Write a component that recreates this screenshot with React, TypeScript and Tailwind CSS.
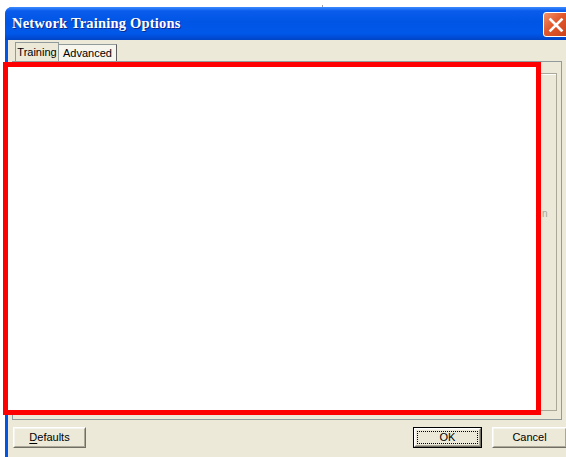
import type { ReactNode } from 'react'

const UI_FONT = "font-['Liberation_Sans','DejaVu_Sans',sans-serif]"

function XpButton({ children, wide, isDefault }: { children: ReactNode; wide: string; isDefault?: boolean }) {
  return (
    <div className={`${wide} h-[21px] ${isDefault ? 'border border-[#000000]' : ''}`}>
      <div className="flex h-full w-full items-center justify-center border border-t-white border-l-white border-b-[#716F64] border-r-[#716F64] bg-[#ECE9D8]">
        <div
          className={`flex h-full w-full items-center justify-center border border-t-[#F5F4EF] border-l-[#F5F4EF] border-b-[#ACA899] border-r-[#ACA899] ${
            isDefault ? 'outline-1 outline-dotted outline-[#000000] -outline-offset-[3px]' : ''
          }`}
        >
          <span className="text-[11px] leading-none text-black">{children}</span>
        </div>
      </div>
    </div>
  )
}

export default function App() {
  return (
    <div className={`relative h-[457px] w-[566px] overflow-hidden bg-white ${UI_FONT}`}>
      {/* dialog window */}
      <div className="ml-[5px] mt-[7px] flex h-[460px] w-[580px] flex-col overflow-hidden rounded-tl-[7px] bg-[#0055E5]">
        {/* caption bar */}
        <div className="relative flex h-[33px] shrink-0 items-center bg-[linear-gradient(to_bottom,#3D8BFF_0%,#0A5CEB_12%,#0055E5_45%,#0058EA_80%,#0044C6_100%)] pl-[7px]">
          <span className="pt-[1px] font-['Liberation_Serif','DejaVu_Serif',serif] text-[14.5px] font-bold tracking-[0.2px] text-white [text-shadow:1px_1px_0_#0A2A8C]">
            Network Training Options
          </span>
          <div className="absolute left-[538px] top-[5px] flex h-[25px] w-[26px] items-center justify-center rounded-[3px] border border-white bg-[linear-gradient(135deg,#F0926A_0%,#E2582C_45%,#C9421B_100%)]">
            <svg width="16" height="16" viewBox="0 0 16 16">
              <path d="M2.5 2.5 L13.5 13.5 M13.5 2.5 L2.5 13.5" stroke="white" strokeWidth="2.6" strokeLinecap="square" />
            </svg>
          </div>
        </div>

        {/* client area */}
        <div className="ml-[3px] flex flex-1 flex-col bg-[#ECE9D8]">
          {/* tab strip */}
          <div className="flex h-[21px] shrink-0 items-end pl-[7px]">
            <div className="flex h-[19px] w-[44px] items-center justify-center border border-b-0 border-[#919B9C] bg-[#ECE9D8] text-[11px] text-black">
              Training
            </div>
            <div className="flex h-[17px] w-[58px] items-center justify-center border border-b-0 border-l-0 border-[#919B9C] border-r-[#5E5E5E] bg-[#F6F5EE] text-[11px] text-black">
              Advanced
            </div>
          </div>

          {/* tab page */}
          <div className="ml-[4px] h-[359px] w-[550px] shrink-0 border border-[#919B9C] bg-[#ECE9D8] px-[2px] pt-[11px] pb-[8px]">
            <div className="relative h-full w-[542px] border border-[#ACA899] shadow-[inset_1px_1px_0_#FFFFFF]">
              <span className="absolute left-[526px] top-[135px] text-[10px] leading-none text-[#A8A597]">n</span>
            </div>
          </div>

          {/* command buttons */}
          <div className="flex items-center pl-[5px] pt-[7px]">
            <XpButton wide="w-[73px]">
              <span className="underline underline-offset-2">D</span>efaults
            </XpButton>
            <div className="flex-1" />
            <div className="mr-[18px] flex gap-[10px]">
              <XpButton wide="w-[69px]" isDefault>
                OK
              </XpButton>
              <XpButton wide="w-[75px]">Cancel</XpButton>
            </div>
          </div>
        </div>
      </div>

      {/* stray pixel above the caption */}
      <div className="absolute left-[322px] top-[5px] h-[2px] w-[1px] bg-[#A0A0A0]" />

      {/* red highlight frame laid over the tab page */}
      <div className="absolute left-[3px] top-[62px] h-[353px] w-[538px] border-[5px] border-[#FF0000] bg-white" />
    </div>
  )
}
